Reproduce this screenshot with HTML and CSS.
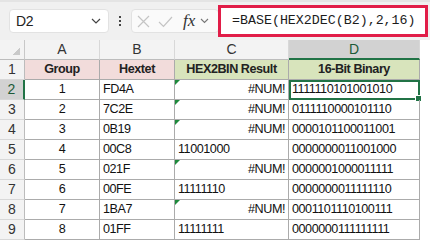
FILE: index.html
```html
<!DOCTYPE html>
<html lang="en">
<head>
    <meta charset="UTF-8">
    <title>Hextet to Binary</title>
    <link rel="stylesheet" href="styles.css">
</head>
<body>
    <div class="toolbar">
        <div class="name-box">
            <span>D2</span>
            <svg class="chev" width="10" height="6" viewBox="0 0 10 6"><path d="M1 1l4 4 4-4" fill="none" stroke="#444" stroke-width="1.2"/></svg>
        </div>
        <div class="dots"><i></i><i></i><i></i></div>
        <div class="fx-box">
            <svg width="13" height="13" viewBox="0 0 13 13"><path d="M1 1l11 11M12 1L1 12" stroke="#c4c4c4" stroke-width="1.2"/></svg>
            <svg width="15" height="13" viewBox="0 0 15 13"><path d="M1 7l4.5 4.5L14 2" fill="none" stroke="#c4c4c4" stroke-width="1.2"/></svg>
            <span class="fx">fx</span>
            <svg width="9" height="6" viewBox="0 0 9 6"><path d="M1 1l3.5 3.5L8 1" fill="none" stroke="#777" stroke-width="1.1"/></svg>
        </div>
        <div class="formula">=BASE(HEX2DEC(B2),2,16)</div>
    </div>

    <div class="sheet">
        <div class="corner"></div>
        <div class="col-head">A</div>
        <div class="col-head">B</div>
        <div class="col-head">C</div>
        <div class="col-head active">D</div>

        <div class="row-head">1</div>
        <div class="cell th pink">Group</div>
        <div class="cell th pink">Hextet</div>
        <div class="cell th green">HEX2BIN Result</div>
        <div class="cell th green">16-Bit Binary</div>

        <div class="row-head active">2</div>
        <div class="cell mid">1</div>
        <div class="cell">FD4A</div>
        <div class="cell right err">#NUM!</div>
        <div class="cell selected">1111110101001010<span class="handle"></span></div>

        <div class="row-head">3</div>
        <div class="cell mid">2</div>
        <div class="cell">7C2E</div>
        <div class="cell right err">#NUM!</div>
        <div class="cell">0111110000101110</div>

        <div class="row-head">4</div>
        <div class="cell mid">3</div>
        <div class="cell">0B19</div>
        <div class="cell right err">#NUM!</div>
        <div class="cell">0000101100011001</div>

        <div class="row-head">5</div>
        <div class="cell mid">4</div>
        <div class="cell">00C8</div>
        <div class="cell">11001000</div>
        <div class="cell">0000000011001000</div>

        <div class="row-head">6</div>
        <div class="cell mid">5</div>
        <div class="cell">021F</div>
        <div class="cell right err">#NUM!</div>
        <div class="cell">0000001000011111</div>

        <div class="row-head">7</div>
        <div class="cell mid">6</div>
        <div class="cell">00FE</div>
        <div class="cell">11111110</div>
        <div class="cell">0000000011111110</div>

        <div class="row-head">8</div>
        <div class="cell mid">7</div>
        <div class="cell">1BA7</div>
        <div class="cell right err">#NUM!</div>
        <div class="cell">0001101110100111</div>

        <div class="row-head">9</div>
        <div class="cell mid">8</div>
        <div class="cell">01FF</div>
        <div class="cell">11111111</div>
        <div class="cell">0000000111111111</div>
    </div>
</body>
</html>
```

FILE: styles.css
```css
body {
    margin: 0;
    background-color: #fff;
    font-family: "Liberation Sans", Arial, sans-serif;
    overflow: hidden;
}

/* formula bar */
.toolbar {
    height: 40px;
    background-color: #f0f0f0;
    border-top: 2px solid #e4e4e4;
    box-sizing: border-box;
    display: flex;
    align-items: center;
    padding-left: 9px;
}

.name-box {
    width: 100px;
    height: 24px;
    box-sizing: border-box;
    background-color: #fff;
    border: 1px solid #e2e2e2;
    border-radius: 4px;
    display: flex;
    align-items: center;
    justify-content: space-between;
    padding: 0 7px 0 6px;
    font-size: 14px;
    letter-spacing: -0.3px;
    color: #222;
}

.dots {
    width: 22px;
    display: flex;
    flex-direction: column;
    align-items: center;
    gap: 2px;
}

.dots i {
    width: 2px;
    height: 2px;
    background-color: #444;
}

.fx-box {
    width: 88px;
    height: 24px;
    box-sizing: border-box;
    background-color: #fafafa;
    border: 1px solid #e2e2e2;
    border-radius: 4px;
    display: flex;
    align-items: center;
    gap: 8px;
    padding-left: 5px;
}

.fx {
    font-family: "Liberation Serif", serif;
    font-style: italic;
    font-size: 17px;
    color: #333;
    margin-left: 2px;
    margin-right: -3px;
}

.formula {
    margin-left: -1px;
    width: 210px;
    height: 32px;
    box-sizing: border-box;
    border: 3px solid #e11d48;
    background-color: #fff;
    font-family: "Liberation Mono", monospace;
    font-size: 13.3px;
    color: #1c1c1c;
    padding-left: 11px;
    line-height: 26px;
}

/* sheet grid */
.sheet {
    display: grid;
    grid-template-columns: 25px 75px 75px 114px 131px;
    grid-auto-rows: 20px;
    font-size: 12.6px;
    letter-spacing: -0.45px;
    color: #111;
}

.corner,
.col-head,
.row-head,
.cell {
    box-sizing: border-box;
    border-right: 1px solid #c8c8c8;
    border-bottom: 1px solid #c8c8c8;
}

.corner {
    background: linear-gradient(135deg, #f3f3f3 62%, #c9c9c9 62%) no-repeat right 4px bottom 4px / 10px 10px, #f3f3f3;
    border-bottom-color: #bcbcbc;
}

.col-head {
    background-color: #f3f3f3;
    border-bottom-color: #bcbcbc;
    text-align: center;
    line-height: 19px;
    font-size: 14px;
    letter-spacing: 0;
    color: #333;
    border-right-color: #d8d8d8;
}

.col-head.active {
    background-color: #d2d2d2;
    border-bottom: 2px solid #217346;
    color: #1d5a37;
}

.row-head {
    background-color: #f3f3f3;
    text-align: center;
    line-height: 19px;
    font-size: 14px;
    letter-spacing: 0;
    color: #333;
    border-right-color: #bcbcbc;
    border-bottom-color: #d8d8d8;
}

.row-head.active {
    background-color: #d2d2d2;
    border-right: 2px solid #217346;
    color: #1d5a37;
}

.cell {
    position: relative;
    line-height: 19px;
    padding: 0 3px;
    white-space: nowrap;
    border-color: #ababab;
}

.th {
    font-weight: bold;
    text-align: center;
    color: #222;
}

.pink {
    background-color: #f2dcdb;
}

.green {
    background-color: #d8e4bc;
}

.mid {
    text-align: center;
}

.right {
    text-align: right;
}

/* green error marker */
.err::before {
    content: "";
    position: absolute;
    left: 0;
    top: 0;
    border-top: 5px solid #1e8a3c;
    border-right: 5px solid transparent;
}

.selected {
    outline: 2px solid #217346;
    outline-offset: -2px;
}

.handle {
    position: absolute;
    right: -3px;
    bottom: -3px;
    width: 5px;
    height: 5px;
    background-color: #217346;
    border: 1px solid #fff;
}
```
